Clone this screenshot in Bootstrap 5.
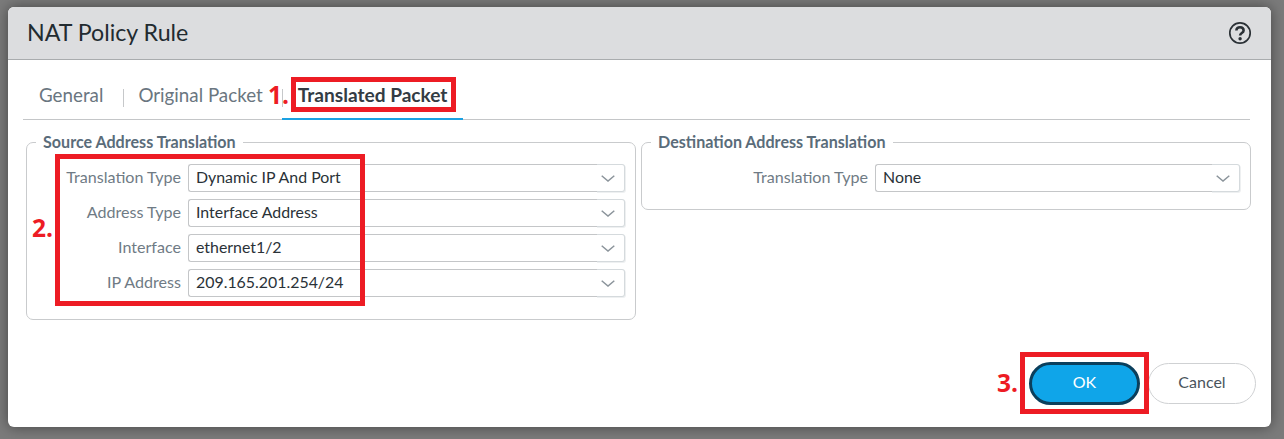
<!DOCTYPE html>
<html lang="en">
<head>
<meta charset="utf-8">
<title>NAT Policy Rule</title>
<link rel="stylesheet" href="https://cdn.jsdelivr.net/npm/bootstrap@5.3.0/dist/css/bootstrap.min.css">
<style>
html,body{height:439px;overflow:hidden}
body{background:#7b7b7b;font-family:"Lato","Liberation Sans",sans-serif;position:relative;padding:7px 13px 12px 8px}
.dlg{height:420px;background:#fff;border-radius:6px;box-shadow:0 0 14px rgba(0,0,0,.45);display:flex;flex-direction:column;overflow:hidden}
.dlg-head{height:53px;flex:none;background:#dcdddf;border-bottom:1px solid #a9acae;padding:0 19px 0 19px}
.dlg-title{font-size:23.2px;color:#222b30;margin:0;font-weight:400;line-height:1}
.tabbar{margin:20px 21px 0 15px;height:40px;border-bottom:1px solid #c4c6c8;flex:none}
.tabitem{font-size:18.8px;color:#6a7680;padding:0 19px 0 15px;height:30px;line-height:30px;position:relative}
.tabitem:first-child{padding:0 20px 0 16px}
.tabitem+.tabitem::before{content:"";position:absolute;left:0;top:9px;height:18px;width:1px;background:#c6c8ca}
.tabitem.now{font-weight:700;font-size:19.1px;color:#333c44;padding:0 16px;height:40px;border-bottom:2px solid #1ba1e2;margin-bottom:-1px}
.panes{padding:13px 20px 0 18px;gap:5px;align-items:flex-start}
.fset{flex:1 1 0;border:1px solid #c9cbcd;border-radius:7px;min-width:0;margin:0;padding:13px 10px 22px 0}
.fset.short{padding-bottom:17px}
.fset legend{float:none;width:auto;margin:0 0 0 9px;padding:0 7px;font-size:16.1px;line-height:18px;font-weight:700;color:#5a6c7a}
.frow{height:28px;margin-bottom:7px}
.frow:last-child{margin-bottom:0}
.flabel{font-size:16.1px;color:#6f7b85;text-align:right;width:154px;flex:none;margin-right:7px;white-space:nowrap;padding-bottom:2px}
.short .flabel{width:226px}
.fbox{border-radius:3px}
.fbox .form-control{font-size:15.9px;line-height:23px;padding:0 7px;height:28px;color:#2a3238;border-color:#c4c6c8;border-right:0;border-radius:3px 0 0 3px;white-space:nowrap}
.fbox .input-group-text{width:29px;height:28px;padding:0 4px 0 0;justify-content:center;background:#fff;border:1px solid #d5dadd;border-left:0;border-radius:0 3px 3px 0;box-shadow:1px 1px 0 #eef0f1}
.dlg-foot{margin-top:auto;padding:0 15px 22px 0;gap:8px;align-items:center}
.okbtn,.okbtn:hover{width:111px;height:43px;background:#0fa5e9;border:3px solid #0b3f5c;border-radius:22px;color:#fff;font-size:16px;padding:0 0 4px}
.nobtn,.nobtn:hover{width:108px;height:41px;background:#fff;border:1px solid #cfd1d3;border-radius:21px;color:#4a545c;font-size:16px;padding:0 0 3px}
.redbox{position:absolute;border:5px solid #ed1c24;pointer-events:none}
.rednum{position:absolute;color:#ed1c24;font-family:"Open Sans","Liberation Sans",sans-serif;font-weight:700;font-size:24.500px;line-height:28px}
.rb1{left:291px;top:77px;width:165px;height:35px}
.rb2{left:55px;top:154px;width:310px;height:152px}
.rb3{left:1020px;top:352px;width:129px;height:62px}
.rn1{left:268px;top:81px}
.rn2{left:32px;top:214px}
.rn3{left:997px;top:369px}
</style>
</head>
<body>
<div class="dlg">
  <div class="dlg-head d-flex align-items-center justify-content-between">
    <h1 class="dlg-title">NAT Policy Rule</h1>
    <svg width="24" height="24" viewBox="0 0 24 24" aria-hidden="true"><circle cx="12" cy="12" r="10.2" fill="none" stroke="#2b3136" stroke-width="1.700"/><path d="M8.400 9.600c0-2.200 1.600-3.400 3.600-3.400s3.600 1.200 3.600 3.200c0 2.700-3.500 2.500-3.500 5" fill="none" stroke="#2b3136" stroke-width="2.600"/><circle cx="12.100" cy="17.700" r="1.700" fill="#2b3136"/></svg>
  </div>
  <div class="tabbar d-flex align-items-start">
    <div class="tabitem">General</div>
    <div class="tabitem">Original Packet</div>
    <div class="tabitem now">Translated Packet</div>
  </div>
  <div class="panes d-flex">
    <fieldset class="fset">
      <legend>Source Address Translation</legend>
      <div class="frow d-flex align-items-center"><div class="flabel">Translation Type</div><div class="fbox input-group flex-nowrap"><div class="form-control">Dynamic IP And Port</div><span class="input-group-text"><svg width="14" height="7" viewBox="0 0 14 7"><path d="M.7.7L7 6 13.300.7" fill="none" stroke="#8b949b" stroke-width="1.500"/></svg></span></div></div>
      <div class="frow d-flex align-items-center"><div class="flabel">Address Type</div><div class="fbox input-group flex-nowrap"><div class="form-control">Interface Address</div><span class="input-group-text"><svg width="14" height="7" viewBox="0 0 14 7"><path d="M.7.7L7 6 13.300.7" fill="none" stroke="#8b949b" stroke-width="1.500"/></svg></span></div></div>
      <div class="frow d-flex align-items-center"><div class="flabel">Interface</div><div class="fbox input-group flex-nowrap"><div class="form-control">ethernet1/2</div><span class="input-group-text"><svg width="14" height="7" viewBox="0 0 14 7"><path d="M.7.7L7 6 13.300.7" fill="none" stroke="#8b949b" stroke-width="1.500"/></svg></span></div></div>
      <div class="frow d-flex align-items-center"><div class="flabel">IP Address</div><div class="fbox input-group flex-nowrap"><div class="form-control">209.165.201.254/24</div><span class="input-group-text"><svg width="14" height="7" viewBox="0 0 14 7"><path d="M.7.7L7 6 13.300.7" fill="none" stroke="#8b949b" stroke-width="1.500"/></svg></span></div></div>
    </fieldset>
    <fieldset class="fset short">
      <legend>Destination Address Translation</legend>
      <div class="frow d-flex align-items-center"><div class="flabel">Translation Type</div><div class="fbox input-group flex-nowrap"><div class="form-control">None</div><span class="input-group-text"><svg width="14" height="7" viewBox="0 0 14 7"><path d="M.7.7L7 6 13.300.7" fill="none" stroke="#8b949b" stroke-width="1.500"/></svg></span></div></div>
    </fieldset>
  </div>
  <div class="dlg-foot d-flex justify-content-end">
    <button type="button" class="btn okbtn">OK</button>
    <button type="button" class="btn nobtn">Cancel</button>
  </div>
</div>
<div class="redbox rb1"></div>
<div class="redbox rb2"></div>
<div class="redbox rb3"></div>
<div class="rednum rn1">1.</div>
<div class="rednum rn2">2.</div>
<div class="rednum rn3">3.</div>
</body>
</html>
